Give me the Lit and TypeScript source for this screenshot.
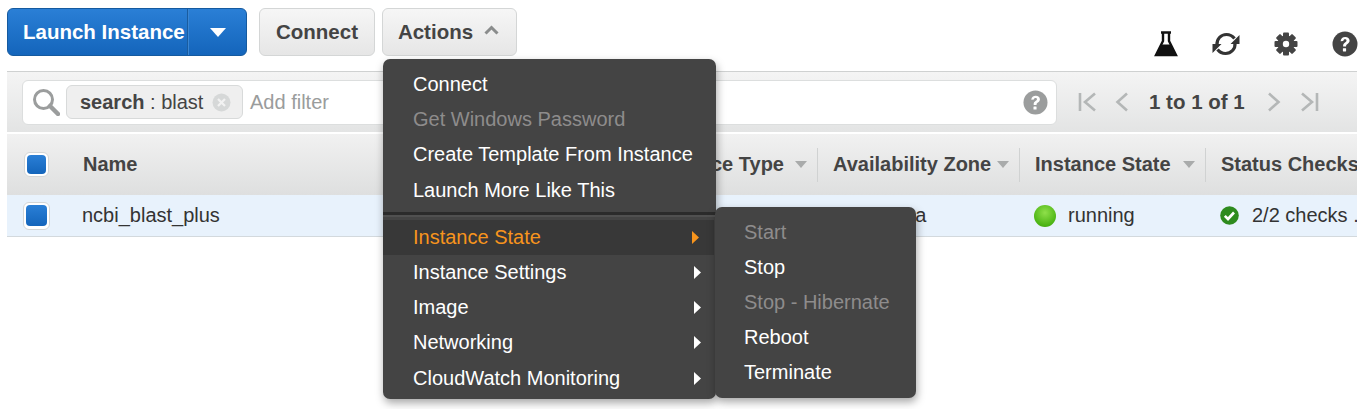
import { LitElement, html, css, svg } from "lit";
import { customElement } from "lit/decorators.js";

const helpIcon = (cls: string) => html`<svg class=${cls} viewBox="0 0 26 26"><circle cx="13" cy="13" r="12.5" fill="currentColor"/><path d="M8.6 10.2c.2-2.9 2.1-4.3 4.6-4.3 2.6 0 4.4 1.5 4.4 3.7 0 1.7-.9 2.6-2.1 3.4-1.1.7-1.4 1.1-1.4 2.2v.4h-3v-.7c0-1.7.6-2.5 1.9-3.4 1-.7 1.5-1.1 1.5-1.9 0-.8-.6-1.3-1.5-1.3-1 0-1.6.6-1.7 1.7z" fill="#fff"/><rect x="10.9" y="17.2" width="3.2" height="3.2" rx=".4" fill="#fff"/></svg>`;

const sortArrow = html`<svg class="sort" viewBox="0 0 12 7"><path d="M0 0h12L6 7z" fill="#a9abab"/></svg>`;

const pagerIcon = (d: string, w: number) => html`<svg width=${w} height="22" viewBox="0 0 ${w} 22"><path d=${d} fill="none" stroke="#b4b7b7" stroke-width="2.6"/></svg>`;

@customElement("app-root")
export class AppRoot extends LitElement {
  static styles = css`
    :host { display: block; height: 409px; overflow: hidden; background: #fff; font-family: "Liberation Sans", Arial, sans-serif; font-size: 20px; color: #444; }
    .page { position: relative; height: 409px; padding: 8px 5px 0 7px; box-sizing: border-box; }
    .top { display: flex; align-items: flex-start; height: 63px; }
    .launch { display: flex; height: 48px; box-sizing: border-box; width: 240px; border-radius: 6px; border: 1px solid #155a9f; background: linear-gradient(#2a7fd6, #1465bb); color: #fff; font-weight: 700; font-size: 20.5px; }
    .launch span { display: flex; align-items: center; padding-left: 15px; width: 180px; box-sizing: border-box; border-right: 1px solid #1a5c9f; margin-bottom: 0; }
    .launch i { flex: 1; display: flex; align-items: center; justify-content: center; border-left: 1px solid #3a86d3; }
    .launch svg { width: 16px; height: 9px; }
    .btn { display: flex; align-items: center; justify-content: center; height: 48px; box-sizing: border-box; border: 1px solid #d4d6d6; border-radius: 6px; background: linear-gradient(#f6f6f6, #e6e6e6); font-weight: 700; font-size: 20.5px; color: #444; }
    .connect { width: 116px; margin-left: 12px; }
    .actions { width: 135px; margin-left: 7px; gap: 11px; padding-right: 2px; }
    .actions svg { width: 15px; height: 10px; margin-top: -5px; }
    .tools { margin-left: auto; display: flex; align-items: center; gap: 32px; margin-top: 23px; padding-right: 0; margin-right: -1px; }
    .tools svg { display: block; color: #444; }
    .flask { width: 24px; height: 26px; }
    .sync { width: 32px; height: 26px; }
    .gear { width: 24px; height: 24px; }
    .help-top { width: 26px; height: 26px; margin-left: 2px; }
    .filterbar { display: flex; align-items: center; height: 61px; box-sizing: border-box; padding: 0 15px; border-top: 1px solid #cfd1d1; background: linear-gradient(#f4f4f4, #e3e4e4); }
    .search { display: flex; align-items: center; width: 1035px; height: 45px; box-sizing: border-box; margin-top: 0; background: #fff; border: 1px solid #dcdede; border-radius: 6px; padding: 0 9px; }
    .lens { width: 28px; height: 28px; flex: none; }
    .chip { display: flex; align-items: center; height: 34px; width: 177px; box-sizing: border-box; margin-left: 6px; padding-left: 13px; border: 1px solid #d8dada; border-radius: 6px; background: #efefef; font-size: 20px; color: #444; white-space: pre; }
    .chip b { font-weight: 700; }
    .chip svg { width: 19px; height: 19px; margin-left: 9px; }
    .placeholder { margin-left: 7px; color: #9a9c9c; }
    .help-sm { width: 25px; height: 25px; margin-left: auto; margin-right: -1px; color: #9b9d9d; }
    .pager { display: flex; align-items: center; margin-left: 21px; font-weight: 700; font-size: 20.5px; color: #444; }
    .pager svg { display: block; }
    .pager .txt { margin: 0 23px 0 21px; }
    .thead, .row { display: grid; grid-template-columns: 60px 581px 169px 202px 186px 1fr; align-items: center; }
    .thead { height: 63px; border-top: 2px solid #fff; box-sizing: border-box; background: linear-gradient(#f1f1f1, #dedfdf); font-weight: 700; font-size: 20px; color: #444; }
    .th { display: flex; align-items: center; height: 34px; padding-left: 15px; border-left: 1px solid #d0d2d2; white-space: nowrap; box-sizing: border-box; overflow: hidden; }
    .th.first { border-left: none; padding-left: 16px; }
    .th.type { justify-content: flex-end; padding-right: 10px; }
    .sort { width: 12px; height: 7px; margin-left: 11px; flex: none; }
    .th.sp .sort { margin-left: auto; margin-right: 10px; }
    .cbcell { display: flex; justify-content: center; padding-right: 1px; }
    .cb { width: 25px; height: 25px; box-sizing: border-box; border: 1px solid #d4d6d6; border-radius: 6px; background: #fff; display: flex; align-items: center; justify-content: center; }
    .cb::after { content: ""; width: 19px; height: 19px; border-radius: 4px; background: linear-gradient(#2a7fd6, #1465bb); }
    .row { height: 42px; box-sizing: border-box; background: #e8f2fc; border-bottom: 1px solid #d3d9dd; font-size: 20px; color: #333; }
    .row .cb { width: 27px; height: 28px; }
    .row .cb::after { width: 21px; height: 21px; }
    .td { padding-left: 15px; white-space: nowrap; display: flex; align-items: center; overflow: hidden; }
    .status-dot { width: 22px; height: 22px; margin-right: 12px; border-radius: 50%; flex: none; background: radial-gradient(circle at 50% 35%, #8fe04a, #4cb414 70%, #3c9a10); }
    .check { width: 19px; height: 19px; margin-right: 13px; flex: none; }
    .menu { position: absolute; background: #444; border-radius: 7px; color: #fff; font-size: 20px; box-shadow: 1px 4px 8px rgba(0, 0, 0, 0.35); box-sizing: border-box; }
    .main { left: 383px; top: 59px; width: 333px; height: 340px; padding: 8px 0 0; }
    .sub { left: 715px; top: 207px; width: 201px; height: 191px; padding: 7.5px 0 0; }
    .item { display: flex; align-items: center; justify-content: space-between; height: 35.2px; padding: 0 15px 0 30px; white-space: nowrap; box-sizing: border-box; }
    .sub .item { padding-left: 29px; }
    .item.off { color: #8e8c8c; }
    .item.on { color: #f7941d; background: #383838; width: 331px; }
    .item svg { width: 7px; height: 13px; flex: none; }
    .sep { height: 3px; margin: 4px 0 3px; background: #2b2b2b; border-bottom: 2px solid #505050; }
  `;

  render() {
    const arrow = (c: string) => html`<svg viewBox="0 0 7 13"><path d="M0 0l7 6.5L0 13z" fill=${c}/></svg>`;
    return html`<div class="page">
      <div class="top">
        <div class="launch"><span>Launch Instance</span><i><svg viewBox="0 0 16 9"><path d="M0 0h16L8 9z" fill="#fff"/></svg></i></div>
        <div class="btn connect">Connect</div>
        <div class="btn actions">Actions <svg viewBox="0 0 15 10"><path d="M1.5 8.5L7.5 2.5l6 6" fill="none" stroke="#8a8c8c" stroke-width="3"/></svg></div>
        <div class="tools">
          <svg class="flask" viewBox="0 0 24 26"><path d="M7 1.5h10M9 2v8L2 24h20L15 10V2" fill="none" stroke="#111" stroke-width="2.4"/><path d="M7.6 13.5h8.8L23 25H1z" fill="#111"/></svg>
          <svg class="sync" viewBox="0 0 32 26"><path d="M7 14c-.6-6 4-10.5 9.500-10.500 3.500 0 6 1.500 8 4M25 12c.6 6-4 10.500-9.500 10.500-3.500 0-6-1.500-8-4" fill="none" stroke="#333" stroke-width="3.200"/><path d="M29.500 4v9h-9zM2.500 22v-9h9z" fill="#333" transform="rotate(0)"/></svg>
          <svg class="gear" viewBox="0 0 24 24"><circle cx="12" cy="12" r="5.700" fill="none" stroke="#444" stroke-width="5.400"/><g fill="#444"><rect x="9" y="0.500" width="6" height="23" rx="1"/><rect x="9" y="0.500" width="6" height="23" rx="1" transform="rotate(45 12 12)"/><rect x="9" y="0.500" width="6" height="23" rx="1" transform="rotate(90 12 12)"/><rect x="9" y="0.500" width="6" height="23" rx="1" transform="rotate(135 12 12)"/></g><circle cx="12" cy="12" r="3.200" fill="#fff"/></svg>
          ${helpIcon("help-top")}
        </div>
      </div>
      <div class="filterbar">
        <div class="search">
          <svg class="lens" viewBox="0 0 28 28"><circle cx="11.500" cy="11.500" r="9" fill="none" stroke="#9b9d9d" stroke-width="3"/><path d="M18 18l8 8" stroke="#9b9d9d" stroke-width="4.500" stroke-linecap="round"/></svg>
          <div class="chip"><b>search</b> : blast<svg viewBox="0 0 19 19"><circle cx="9.500" cy="9.500" r="9" fill="#d6d8d8"/><path d="M6 6l7 7M13 6l-7 7" stroke="#f2f2f2" stroke-width="2.200"/></svg></div>
          <span class="placeholder">Add filter</span>
          ${helpIcon("help-sm")}
        </div>
        <div class="pager">
          ${pagerIcon("M2 2v18M17 2.500L7 11l10 8.500", 18)}
          <span style="width:19px"></span>
          ${pagerIcon("M12 2.500L2.500 11l9.500 8.500", 13)}
          <span class="txt">1 to 1 of 1</span>
          ${pagerIcon("M1 2.500L10.500 11 1 19.500", 13)}
          <span style="width:20px"></span>
          ${pagerIcon("M1 2.500L11 11 1 19.500M16 2v18", 18)}
        </div>
      </div>
      <div class="thead">
        <div class="cbcell"><div class="cb"></div></div>
        <div class="th first">Name</div>
        <div class="th type">Instance Type${sortArrow}</div>
        <div class="th sp">Availability Zone${sortArrow}</div>
        <div class="th sp">Instance State${sortArrow}</div>
        <div class="th">Status Checks</div>
      </div>
      <div class="row">
        <div class="cbcell"><div class="cb"></div></div>
        <div class="td">ncbi_blast_plus</div>
        <div class="td"></div>
        <div class="td">us-east-1a</div>
        <div class="td"><span class="status-dot"></span>running</div>
        <div class="td"><svg class="check" viewBox="0 0 19 19"><circle cx="9.500" cy="9.500" r="9.300" fill="#2e8b1e"/><path d="M4.800 9.800l3.200 3.200 6-6.500" fill="none" stroke="#fff" stroke-width="2.600"/></svg>2/2 checks ...</div>
      </div>
      <div class="menu main">
        <div class="item">Connect</div>
        <div class="item off">Get Windows Password</div>
        <div class="item">Create Template From Instance</div>
        <div class="item">Launch More Like This</div>
        <div class="sep"></div>
        <div class="item on">Instance State${arrow("#f7941d")}</div>
        <div class="item">Instance Settings${arrow("#fff")}</div>
        <div class="item">Image${arrow("#fff")}</div>
        <div class="item">Networking${arrow("#fff")}</div>
        <div class="item">CloudWatch Monitoring${arrow("#fff")}</div>
      </div>
      <div class="menu sub">
        <div class="item off">Start</div>
        <div class="item">Stop</div>
        <div class="item off">Stop - Hibernate</div>
        <div class="item">Reboot</div>
        <div class="item">Terminate</div>
      </div>
    </div>`;
  }
}
